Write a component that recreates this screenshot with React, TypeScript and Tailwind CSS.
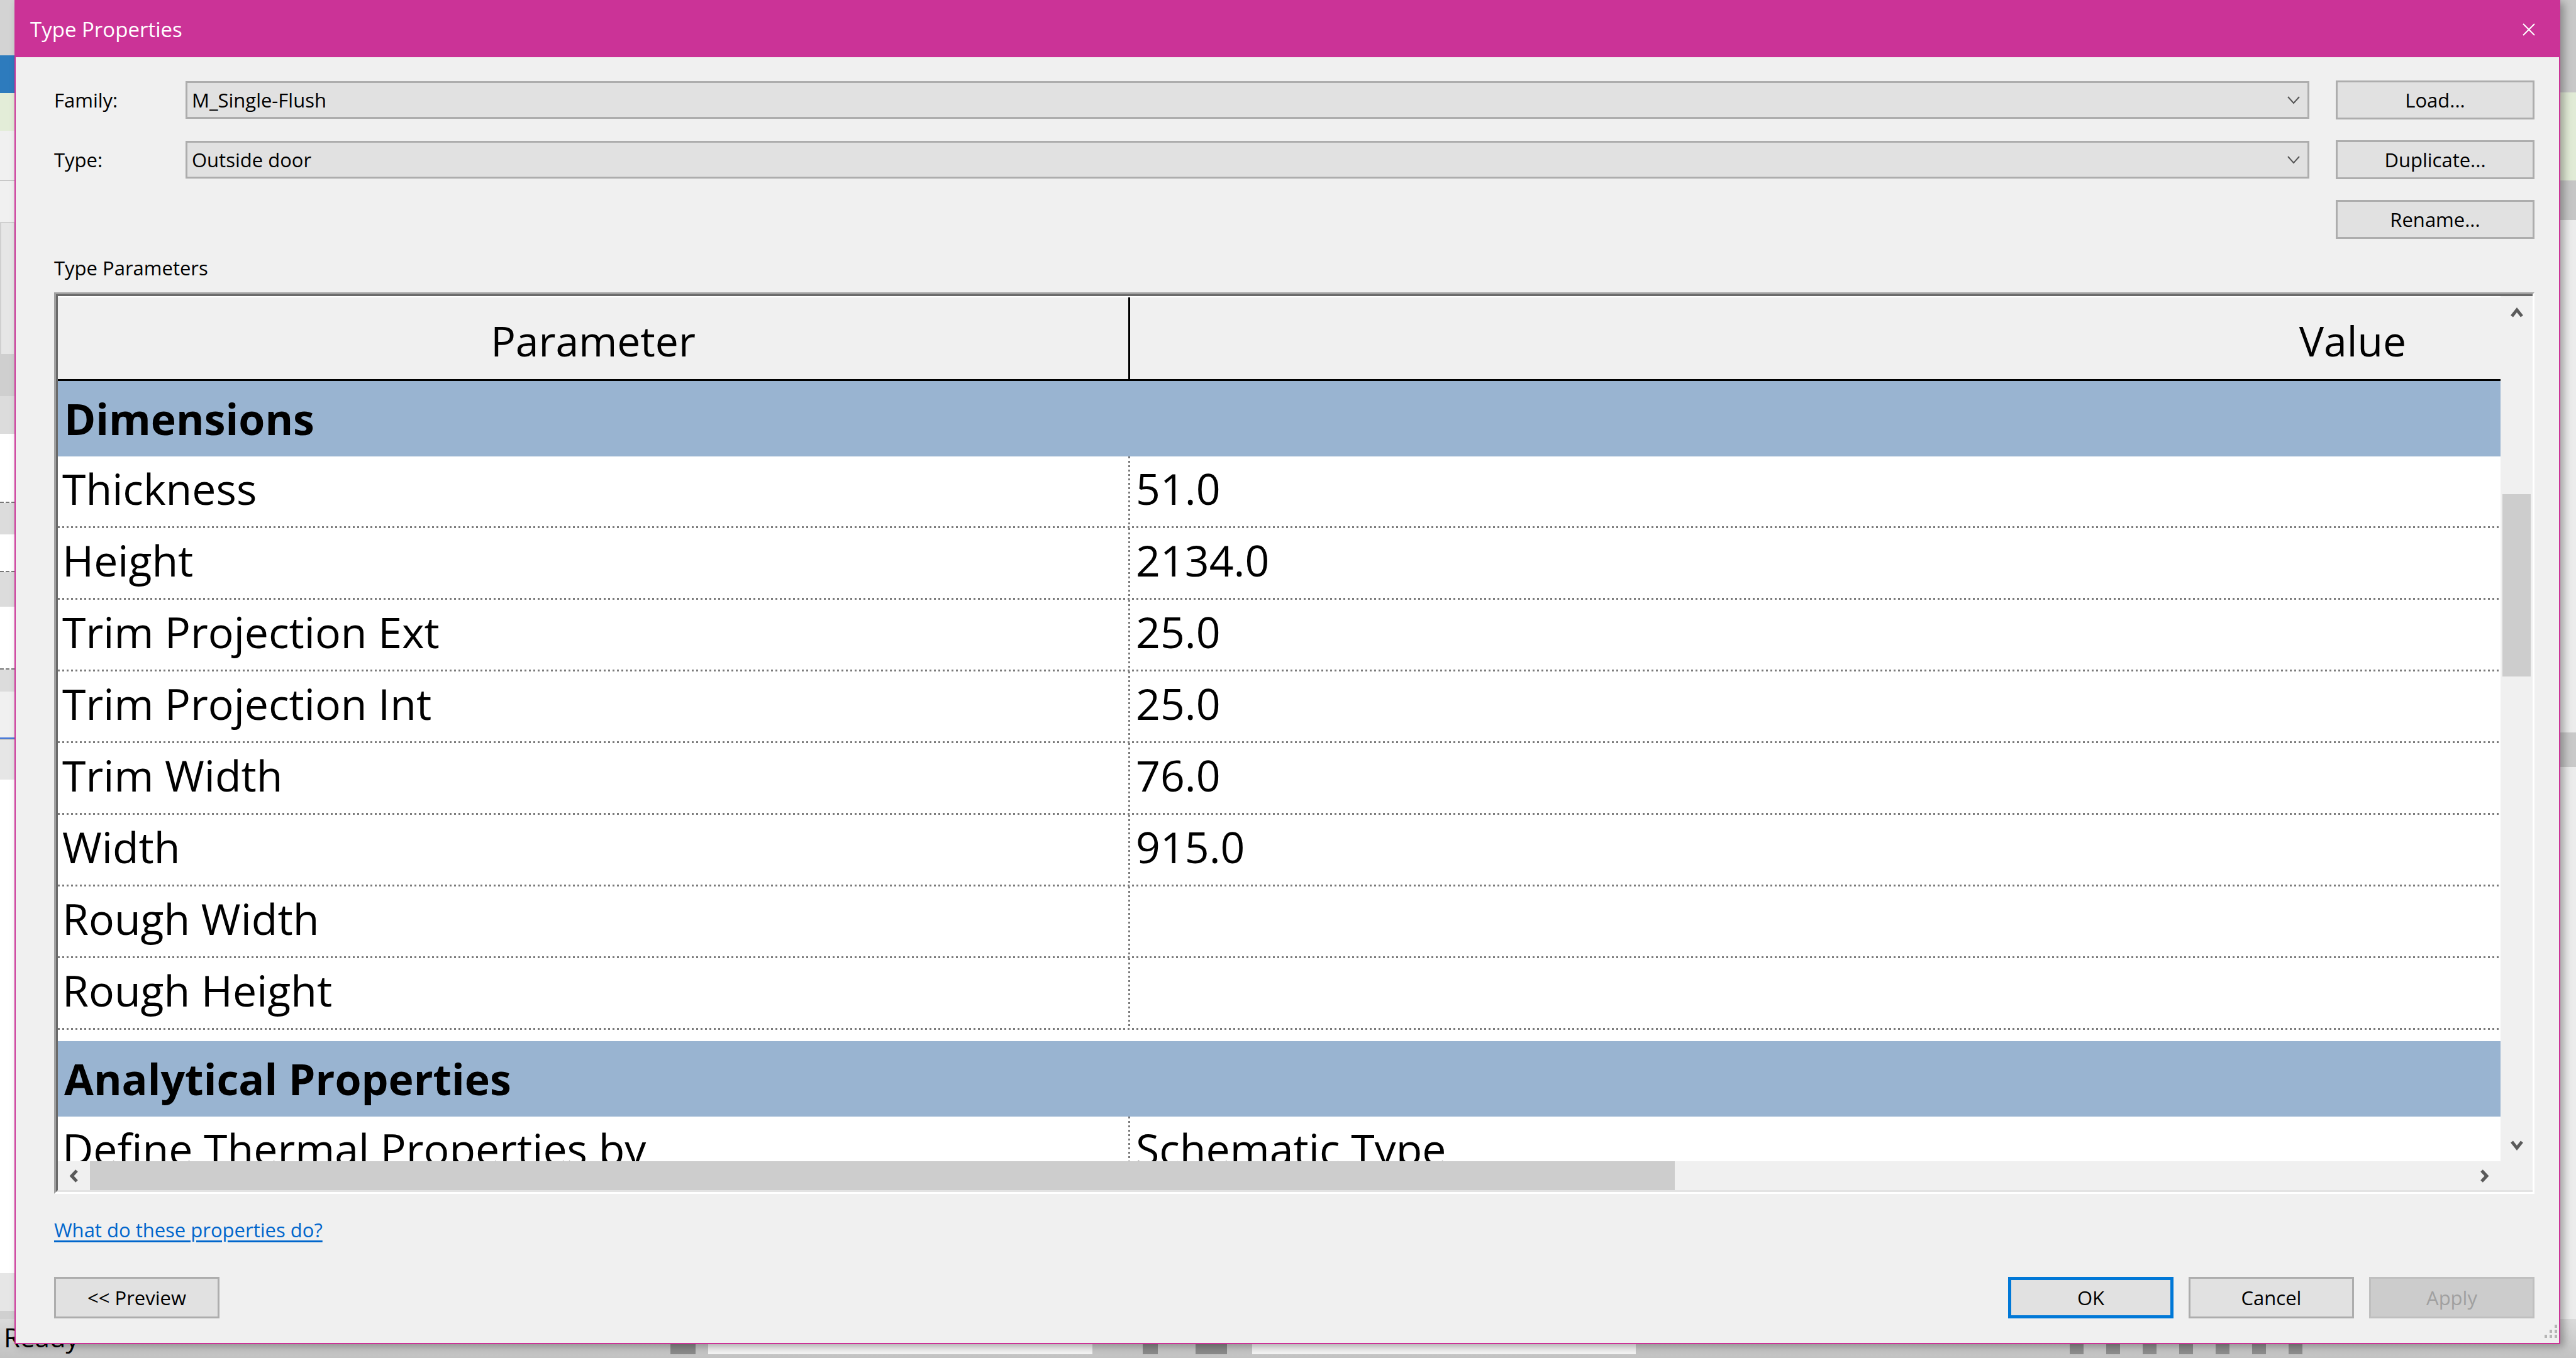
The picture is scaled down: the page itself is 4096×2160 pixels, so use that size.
import React from 'react';

const PARAMS: [string, string][] = [
  ['Thickness', '51.0'],
  ['Height', '2134.0'],
  ['Trim Projection Ext', '25.0'],
  ['Trim Projection Int', '25.0'],
  ['Trim Width', '76.0'],
  ['Width', '915.0'],
  ['Rough Width', ''],
  ['Rough Height', ''],
];

// background app panels peeking out on the left edge
const LEFT_STRIP: { h: number; cls: string }[] = [
  { h: 88, cls: 'bg-[#d3d3d3]' },
  { h: 60, cls: 'bg-[#2d7bbd]' },
  { h: 60, cls: 'bg-[#e3edd8]' },
  { h: 80, cls: 'bg-[#f0f0f0] border-b-2 border-[#c8c8c8]' },
  { h: 65, cls: 'bg-[#f0f0f0]' },
  { h: 212, cls: 'bg-[#e6e6e6] border-2 border-[#cfcfcf]' },
  { h: 65, cls: 'bg-[#cfcfcf]' },
  { h: 60, cls: 'bg-[#dcdcdc]' },
  { h: 110, cls: 'bg-white border-b-2 border-dashed border-[#777]' },
  { h: 50, cls: 'bg-[#dcdcdc]' },
  { h: 60, cls: 'bg-white border-b-2 border-dashed border-[#777]' },
  { h: 55, cls: 'bg-[#dcdcdc]' },
  { h: 100, cls: 'bg-white border-b-2 border-dashed border-[#777]' },
  { h: 35, cls: 'bg-[#dcdcdc]' },
  { h: 75, cls: 'bg-[#f0f0f0] border-b-2 border-[#3a6fd8]' },
  { h: 65, cls: 'bg-[#e6e6e6] border-t-2 border-[#c4c4c4]' },
  { h: 785, cls: 'bg-white' },
  { h: 60, cls: 'bg-[#e6e6e6]' },
];

const RIGHT_STRIP: { h: number; cls: string }[] = [
  { h: 147, cls: 'bg-[#c8c8c8]' },
  { h: 140, cls: 'bg-[#e1ebd6]' },
  { h: 63, cls: 'bg-[#c6c6c6]' },
  { h: 815, cls: 'bg-[#ececec]' },
  { h: 55, cls: 'bg-[#c9c9c9]' },
  { h: 878, cls: 'bg-[#ececec]' },
];

function Chevron({ dir, className }: { dir: 'up' | 'down' | 'left' | 'right'; className?: string }) {
  const pts = {
    up: '3,15 11,5 19,15',
    down: '3,3 11,13 19,3',
    left: '12,2 4,10.5 12,19',
    right: '3,2 11,10.5 3,19',
  }[dir];
  const box = dir === 'up' || dir === 'down' ? '0 0 22 18' : '0 0 15 21';
  return (
    <svg viewBox={box} className={className}>
      <polyline points={pts} fill="none" stroke="#5a5a5a" strokeWidth="5" />
    </svg>
  );
}

function Combo({ value }: { value: string }) {
  return (
    <div className="flex h-[60px] flex-1 items-center border-[3px] border-[#adadad] bg-[#e1e1e1] pl-[7px] pr-[10px]">
      <span className="flex-1 text-[31px] text-black">{value}</span>
      <svg viewBox="0 0 24 14" className="h-[14px] w-[24px]">
        <polyline points="3,2 12,12 21,2" fill="none" stroke="#555" strokeWidth="2" />
      </svg>
    </div>
  );
}

function Btn({ label, border = 'border-[3px] border-[#adadad]', className = '' }: { label: string; border?: string; className?: string }) {
  return (
    <button
      className={`flex shrink-0 items-center justify-center bg-[#e1e1e1] text-[31px] text-black ${border} ${className}`}
    >
      {label}
    </button>
  );
}

const dotsH = 'bg-[image:repeating-linear-gradient(90deg,#7a7a7a_0_3px,transparent_3px_7px)]';
const dotsV = 'bg-[image:repeating-linear-gradient(180deg,#7a7a7a_0_3px,transparent_3px_7px)]';

function ParamRow({ name, value }: { name: string; value: string }) {
  return (
    <div className="flex h-[114px] shrink-0 flex-col bg-white">
      <div className="flex flex-1">
        <div className="flex w-[1702px] items-center pb-[10px] pl-[7px]">{name}</div>
        <div className={`w-[3px] ${dotsV}`} />
        <div className="flex flex-1 items-center pb-[10px] pl-[9px]">{value}</div>
      </div>
      <div className={`h-[3px] ${dotsH}`} />
    </div>
  );
}

function GroupRow({ title }: { title: string }) {
  return (
    <div className="flex h-[120px] shrink-0 items-center bg-[#99b4d1] pl-[10px] font-bold">{title}</div>
  );
}

export default function App() {
  return (
    <div className="relative h-[2160px] w-[4096px] overflow-hidden bg-[#d0d0d0] font-['Open_Sans','Noto_Sans',sans-serif]">
      {/* Revit window behind the dialog */}
      <div className="flex h-full flex-col">
        <div className="flex flex-1">
          <div className="flex w-[24px] flex-col">
            {LEFT_STRIP.map((b, i) => (
              <div key={i} className={`shrink-0 ${b.cls}`} style={{ height: b.h }} />
            ))}
          </div>
          <div className="flex-1 bg-[#ececec]" />
          <div className="flex w-[25px] flex-col">
            {RIGHT_STRIP.map((b, i) => (
              <div key={i} className={`shrink-0 ${b.cls}`} style={{ height: b.h }} />
            ))}
          </div>
        </div>
        <div className="flex h-[62px] items-start bg-gradient-to-b from-[#dadada] to-[#c2c2c2]">
          <span className="pl-[6px] pt-[8px] text-[42px] leading-none text-black">Ready</span>
          <div className="ml-[940px] mt-[40px] h-[16px] w-[40px] bg-[#8a8a8a]" />
          <div className="ml-[20px] mt-[39px] h-[17px] w-[611px] bg-[#f4f4f4]" />
          <div className="ml-[80px] mt-[40px] h-[16px] w-[24px] bg-[#8a8a8a]" />
          <div className="ml-[60px] mt-[40px] h-[16px] w-[50px] bg-[#8a8a8a]" />
          <div className="ml-[40px] mt-[39px] h-[17px] w-[610px] bg-[#f4f4f4]" />
          <div className="ml-[690px] mt-[40px] flex gap-[36px]">
            {[0, 1, 2, 3, 4, 5, 6].map((i) => (
              <div key={i} className="h-[16px] w-[22px] bg-[#8d8d8d]" />
            ))}
          </div>
        </div>
      </div>

      {/* Type Properties dialog */}
      <div className="absolute left-[23px] top-0 flex h-[2138px] w-[4048px] flex-col border-2 border-[#cb3397] bg-[#f0f0f0] shadow-[6px_4px_12px_rgba(0,0,0,0.3)]">
        <div className="flex h-[89px] shrink-0 items-center bg-[#cb3397] pl-[23px] pr-[38px]">
          <span className="flex-1 text-[33px] text-white">Type Properties</span>
          <svg viewBox="0 0 20 20" className="h-[20px] w-[20px]">
            <path d="M1 1 L19 19 M19 1 L1 19" stroke="white" strokeWidth="2" />
          </svg>
        </div>

        <div className="flex flex-1 flex-col pl-[61px] pr-[39px] pt-[37px] text-[31px] text-black">
          <div className="flex h-[62px] items-center">
            <span className="w-[209px]">Family:</span>
            <Combo value="M_Single-Flush" />
            <Btn label="Load..." className="ml-[42px] h-[62px] w-[316px]" />
          </div>
          <div className="mt-[33px] flex h-[62px] items-center">
            <span className="w-[209px]">Type:</span>
            <Combo value="Outside door" />
            <Btn label="Duplicate..." className="ml-[42px] h-[62px] w-[316px]" />
          </div>
          <div className="mt-[33px] flex h-[62px] justify-end">
            <Btn label="Rename..." className="h-[62px] w-[316px]" />
          </div>
          <div className="mt-[26px] flex h-[40px] items-center">Type Parameters</div>

          {/* parameter grid */}
          <div className="mt-[19px] h-[1434px] border-[3px] border-b-white border-l-[#a0a0a0] border-r-white border-t-[#a0a0a0]">
            <div className="flex h-full border-b-[3px] border-l-[3px] border-t-[3px] border-b-[#e3e3e3] border-l-[#696969] border-t-[#696969]">
              <div className="flex flex-1 flex-col overflow-hidden">
                <div className="flex h-[135px] shrink-0 border-b-[3px] border-t-2 border-b-black border-t-white bg-[#f0f0f0] text-[66px] leading-none">
                  <div className="flex w-[1702px] items-center justify-center pt-[6px]">Parameter</div>
                  <div className="w-[3px] bg-black" />
                  <div className="flex flex-1 items-center justify-end pr-[150px] pt-[6px]">Value</div>
                </div>
                <div className="flex h-[1241px] shrink-0 flex-col overflow-hidden text-[68px] leading-none">
                  <GroupRow title="Dimensions" />
                  {PARAMS.map(([n, v]) => (
                    <ParamRow key={n} name={n} value={v} />
                  ))}
                  <div className="h-[18px] shrink-0 bg-white" />
                  <GroupRow title="Analytical Properties" />
                  <ParamRow name="Define Thermal Properties by" value="Schematic Type" />
                </div>
                <div className="flex h-[46px] shrink-0 items-center bg-[#f0f0f0]">
                  <div className="flex w-[51px] justify-center">
                    <Chevron dir="left" className="h-[21px] w-[15px]" />
                  </div>
                  <div className="h-full w-[2520px] bg-[#cdcdcd]" />
                  <div className="flex-1" />
                  <div className="flex w-[51px] justify-center">
                    <Chevron dir="right" className="h-[21px] w-[15px]" />
                  </div>
                </div>
              </div>

              <div className="flex w-[51px] flex-col bg-[#f0f0f0]">
                <div className="flex h-[51px] items-center justify-center">
                  <Chevron dir="up" className="h-[18px] w-[22px]" />
                </div>
                <div className="mx-[3px] mt-[264px] h-[290px] bg-[#cdcdcd]" />
                <div className="flex-1" />
                <div className="flex h-[51px] items-center justify-center">
                  <Chevron dir="down" className="h-[18px] w-[22px]" />
                </div>
                <div className="h-[46px]" />
              </div>
            </div>
          </div>

          <div className="mt-[37px] flex h-[40px] items-center">
            <a href="#" className="text-[#0066cc] underline decoration-[#0066cc] underline-offset-[5px]">
              What do these properties do?
            </a>
          </div>

          <div className="mt-[55px] flex h-[66px] items-center">
            <Btn label="<< Preview" className="h-[66px] w-[263px]" />
            <div className="flex-1" />
            <Btn label="OK" border="border-[5px] border-[#0078d7]" className="h-[66px] w-[263px]" />
            <Btn label="Cancel" className="ml-[24px] h-[66px] w-[263px]" />
            <button className="ml-[24px] flex h-[66px] w-[263px] items-center justify-center border-[3px] border-[#bfbfbf] bg-[#cccccc] text-[31px] text-[#a0a0a0]">
              Apply
            </button>
          </div>
        </div>

        {/* resize grip */}
        <svg viewBox="0 0 24 22" className="absolute bottom-[7px] right-[3px] h-[22px] w-[24px]">
          <g fill="#b5b5b5">
            <rect x="20" y="0" width="4" height="5" />
            <rect x="12" y="8" width="4" height="5" />
            <rect x="20" y="8" width="4" height="5" />
            <rect x="4" y="16" width="4" height="5" />
            <rect x="12" y="16" width="4" height="5" />
            <rect x="20" y="16" width="4" height="5" />
          </g>
        </svg>
      </div>
    </div>
  );
}
